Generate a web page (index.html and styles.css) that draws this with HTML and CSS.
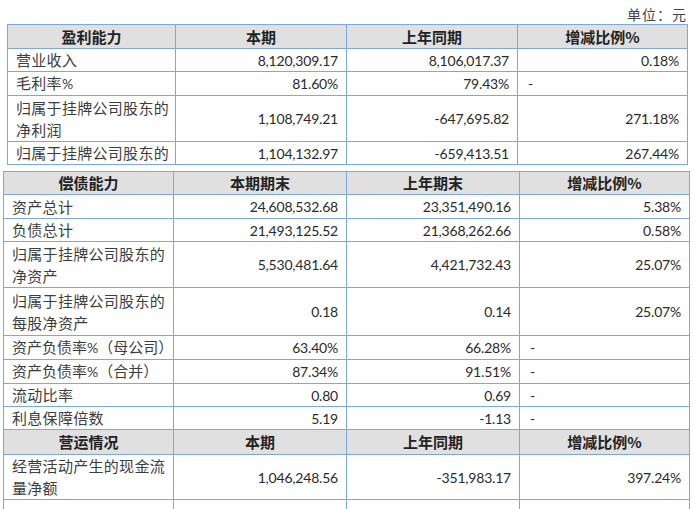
FILE: index.html
```html
<!DOCTYPE html>
<html lang="zh-CN">
<head>
<meta charset="utf-8">
<title>财务指标</title>
<link rel="stylesheet" href="styles.css">
</head>
<body>
<div class="page">
  <div class="unit">单位：元</div>
  <table class="fin t1">
    <colgroup><col class="c1a"><col class="c2a"><col class="c3a"><col class="c4a"></colgroup>
    <tr class="head h24"><th>盈利能力</th><th>本期</th><th>上年同期</th><th>增减比例%</th></tr>
    <tr class="h23"><td class="lbl">营业收入</td><td class="num">8,120,309.17</td><td class="num">8,106,017.37</td><td class="num">0.18%</td></tr>
    <tr class="h24"><td class="lbl">毛利率<span class="lat">%</span></td><td class="num">81.60%</td><td class="num">79.43%</td><td class="dash">-</td></tr>
    <tr class="h46"><td class="lbl">归属于挂牌公司股东的<br>净利润</td><td class="num">1,108,749.21</td><td class="num">-647,695.82</td><td class="num">271.18%</td></tr>
    <tr class="h23"><td class="lbl">归属于挂牌公司股东的</td><td class="num">1,104,132.97</td><td class="num">-659,413.51</td><td class="num">267.44%</td></tr>
  </table>
  <table class="fin t2">
    <colgroup><col class="c1b"><col class="c2b"><col class="c3b"><col class="c4b"></colgroup>
    <tr class="head h23"><th>偿债能力</th><th>本期期末</th><th>上年期末</th><th>增减比例%</th></tr>
    <tr class="h24"><td class="lbl">资产总计</td><td class="num">24,608,532.68</td><td class="num">23,351,490.16</td><td class="num">5.38%</td></tr>
    <tr class="h23"><td class="lbl">负债总计</td><td class="num">21,493,125.52</td><td class="num">21,368,262.66</td><td class="num">0.58%</td></tr>
    <tr class="h46"><td class="lbl">归属于挂牌公司股东的<br>净资产</td><td class="num">5,530,481.64</td><td class="num">4,421,732.43</td><td class="num">25.07%</td></tr>
    <tr class="h48"><td class="lbl">归属于挂牌公司股东的<br>每股净资产</td><td class="num">0.18</td><td class="num">0.14</td><td class="num">25.07%</td></tr>
    <tr class="h23"><td class="lbl tight">资产负债率<span class="lat">%</span>（母公司）</td><td class="num">63.40%</td><td class="num">66.28%</td><td class="dash">-</td></tr>
    <tr class="h24"><td class="lbl tight">资产负债率<span class="lat">%</span>（合并）</td><td class="num">87.34%</td><td class="num">91.51%</td><td class="dash">-</td></tr>
    <tr class="h23"><td class="lbl">流动比率</td><td class="num">0.80</td><td class="num">0.69</td><td class="dash">-</td></tr>
    <tr class="h22"><td class="lbl">利息保障倍数</td><td class="num">5.19</td><td class="num">-1.13</td><td class="dash">-</td></tr>
    <tr class="head h25"><th>营运情况</th><th>本期</th><th>上年同期</th><th>增减比例%</th></tr>
    <tr class="h45"><td class="lbl">经营活动产生的现金流<br>量净额</td><td class="num">1,046,248.56</td><td class="num">-351,983.17</td><td class="num">397.24%</td></tr>
    <tr class="h23"><td class="lbl"></td><td class="num"></td><td class="num"></td><td class="num"></td></tr>
  </table>
</div>
</body>
</html>
```

FILE: styles.css
```css
html, body {
  margin: 0;
  padding: 0;
  background: #ffffff;
}
body {
  width: 695px;
  height: 509px;
  overflow: hidden;
  font-family: "Noto Sans CJK SC", sans-serif;
  color: #333333;
}
.page {
  display: flex;
  flex-direction: column;
  align-items: flex-start;
}
.unit {
  align-self: flex-end;
  height: 24px;
  box-sizing: border-box;
  padding: 5px 8px 0 0;
  font-size: 14px;
  line-height: 18px;
  color: #444444;
  letter-spacing: 1px;
}
.fin {
  border-collapse: collapse;
  table-layout: fixed;
}
.t1 {
  width: 680px;
  margin-left: 7px;
}
.t2 {
  width: 686px;
  margin-left: 3px;
  margin-top: 6px;
}
.c1a { width: 168px; }
.c2a { width: 171px; }
.c3a { width: 171px; }
.c4a { width: 170px; }
.c1b { width: 170px; }
.c2b { width: 173px; }
.c3b { width: 173px; }
.c4b { width: 170px; }
.fin th, .fin td {
  border: 1px solid #7ea8da;
  padding: 0 8px;
  vertical-align: middle;
  white-space: nowrap;
}
.fin th {
  background: #e0e0e0;
  font-weight: bold;
  font-size: 15px;
  line-height: 18px;
  color: #222222;
  text-align: center;
}
.fin td.lbl {
  font-size: 15px;
  line-height: 22px;
  letter-spacing: 0.3px;
  text-align: left;
  color: #3d3d3d;
  padding-right: 0;
}
.fin td.tight {
  letter-spacing: 0;
}
.num {
  font-family: "Lato", sans-serif;
  font-size: 14px;
  letter-spacing: -0.2px;
  text-align: right;
  color: #2a2a2a;
}
.fin td.dash {
  font-family: "Lato", sans-serif;
  font-size: 14px;
  text-align: left;
  padding-left: 10px;
  color: #2a2a2a;
}
.lat {
  font-family: "Lato", sans-serif;
  font-size: 14px;
  letter-spacing: 0;
}
.h22 { height: 22px; }
.h23 { height: 23px; }
.h24 { height: 24px; }
.h25 { height: 25px; }
.h45 { height: 45px; }
.h46 { height: 46px; }
.h48 { height: 48px; }
```
